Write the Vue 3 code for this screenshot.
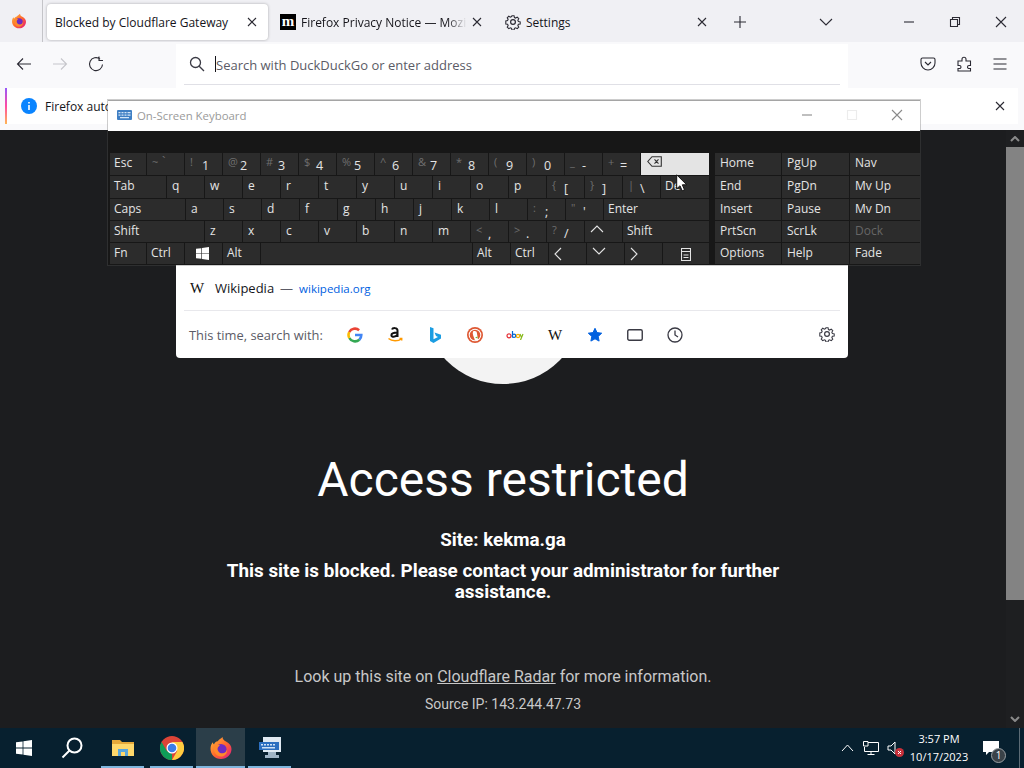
<script setup>
// keyboard rows: w = key width, s = shifted symbol shown dim at top left
const row1 = [
  { t: "Esc", w: 36 },
  { t: "`", s: "~", w: 37, dim: true },
  { t: "1", s: "!", w: 37 },
  { t: "2", s: "@", w: 37 },
  { t: "3", s: "#", w: 37 },
  { t: "4", s: "$", w: 37 },
  { t: "5", s: "%", w: 37 },
  { t: "6", s: "^", w: 37 },
  { t: "7", s: "&", w: 37 },
  { t: "8", s: "*", w: 37 },
  { t: "9", s: "(", w: 37 },
  { t: "0", s: ")", w: 37 },
  { t: "-", s: "_", w: 37 },
  { t: "=", s: "+", w: 37 },
  { icon: "back", w: 68, hot: true },
];
const letters = (str) => str.split("").map((c) => ({ t: c, w: 37, letter: true }));
const row2 = [
  { t: "Tab", w: 56 },
  ...letters("qwertyuiop"),
  { t: "[", s: "{", w: 37 },
  { t: "]", s: "}", w: 37 },
  { t: "\\", s: "|", w: 37 },
  { t: "Del", w: 48 },
];
const row3 = [
  { t: "Caps", w: 75 },
  ...letters("asdfghjkl"),
  { t: ";", s: ":", w: 37 },
  { t: "'", s: '"', w: 37 },
  { t: "Enter", w: 105 },
];
const row4 = [
  { t: "Shift", w: 94 },
  ...letters("zxcvbnm"),
  { t: ",", s: "<", w: 37 },
  { t: ".", s: ">", w: 37 },
  { t: "/", s: "?", w: 37 },
  { icon: "up", w: 37 },
  { t: "Shift", w: 86 },
];
const row5 = [
  { t: "Fn", w: 36 },
  { t: "Ctrl", w: 37 },
  { icon: "win", w: 37 },
  { t: "Alt", w: 37 },
  { w: 211 },
  { t: "Alt", w: 37 },
  { t: "Ctrl", w: 37 },
  { icon: "left", w: 37 },
  { icon: "down", w: 37 },
  { icon: "right", w: 37 },
  { icon: "menu", w: 46 },
];
const keyRows = [row1, row2, row3, row4, row5];

const navKeys = [
  ["Home", "PgUp", "Nav"],
  ["End", "PgDn", "Mv Up"],
  ["Insert", "Pause", "Mv Dn"],
  ["PrtScn", "ScrLk", "Dock"],
  ["Options", "Help", "Fade"],
];
</script>

<template>
  <div class="screen">
    <!-- shared firefox logo -->
    <svg class="defs" width="0" height="0">
      <defs>
        <linearGradient id="foxG" x1="0" y1="0" x2="1" y2="1">
          <stop offset="0" stop-color="#ffbd3f" />
          <stop offset="0.5" stop-color="#ff6a2b" />
          <stop offset="1" stop-color="#e31587" />
        </linearGradient>
        <symbol id="fox" viewBox="0 0 24 24">
          <path fill="url(#foxG)" d="M12 23C5.8 23 1.5 18.300 1.500 12.800 1.500 10 2.500 7.600 3.800 6.200 4 7.500 4.500 8 5 8.400 5.500 6.600 7 5.400 8.800 5.200 10 3.500 11.800 2.700 13.500 1 13.800 3.600 15 4.500 17 5.500 20.500 7 22.500 10 22.500 13 22.500 18.500 18 23 12 23Z" />
          <circle cx="12" cy="13.500" r="5.600" fill="#6e2bc2" />
          <path fill="#ff8a2b" d="M4.500 10C7 8.500 9.500 8.200 11 9.500 9.800 10 8.800 11 8.600 12.500 8.400 15 10.500 17.500 13.500 17.300 16 17.100 17.600 15.500 18 13.200 18.800 17 16 20.500 12 20.500 7.500 20.500 4 16 4.500 10Z" />
        </symbol>
      </defs>
    </svg>

    <!-- tab strip -->
    <header class="tabbar">
      <div class="ff-button">
        <svg width="16" height="16"><use href="#fox" /></svg>
      </div>
      <div class="tab active">
        <span class="tab-title">Blocked by Cloudflare Gateway</span>
        <svg class="x" width="10" height="10" viewBox="0 0 10 10"><path d="M1 1l8 8M9 1l-8 8" /></svg>
      </div>
      <div class="tab">
        <span class="moz">m</span>
        <span class="tab-title fade">Firefox Privacy Notice — Mozilla</span>
        <svg class="x" width="10" height="10" viewBox="0 0 10 10"><path d="M1 1l8 8M9 1l-8 8" /></svg>
      </div>
      <div class="tab">
        <svg class="gear" width="16" height="16" viewBox="0 0 16 16">
          <circle cx="8" cy="8" r="2.400" />
          <path d="M6.800 1h2.400l.4 2 1.300.6 1.800-1 1.700 1.700-1 1.800.6 1.300 2 .4v2.400l-2 .4-.6 1.300 1 1.800-1.700 1.700-1.800-1-1.300.6-.4 2H6.800l-.4-2-1.300-.6-1.800 1-1.700-1.700 1-1.800-.6-1.300-2-.4V6.800l2-.4.600-1.300-1-1.800 1.700-1.700 1.800 1 1.300-.6z" transform="translate(.8 .8) scale(.9)" />
        </svg>
        <span class="tab-title">Settings</span>
        <svg class="x" width="10" height="10" viewBox="0 0 10 10"><path d="M1 1l8 8M9 1l-8 8" /></svg>
      </div>
      <svg class="plus" width="14" height="14" viewBox="0 0 14 14"><path d="M7 1v12M1 7h12" /></svg>
      <svg class="list-all" width="14" height="8" viewBox="0 0 14 8"><path d="M1 1l6 6 6-6" /></svg>
      <div class="win-ctrls">
        <svg width="12" height="12" viewBox="0 0 12 12"><path d="M1 6h10" /></svg>
        <svg width="12" height="12" viewBox="0 0 12 12"><path d="M1.500 3.500h7v7h-7zM3.500 3.500v-2h7v7h-2" /></svg>
        <svg width="12" height="12" viewBox="0 0 12 12"><path d="M1 1l10 10M11 1L1 11" /></svg>
      </div>
    </header>

    <!-- nav toolbar -->
    <div class="toolbar">
      <div class="nav-btns">
        <svg width="16" height="16" viewBox="0 0 16 16"><path d="M15 8H1.500M7 2.500L1.500 8 7 13.500" /></svg>
        <svg class="off" width="16" height="16" viewBox="0 0 16 16"><path d="M1 8h13.500M9 2.500L14.500 8 9 13.500" /></svg>
        <svg width="16" height="16" viewBox="0 0 16 16"><path d="M14.500 8.500A6.500 6.500 0 1 1 12 3M11 .500V4.500h4" /></svg>
      </div>
      <div class="tb-right">
        <svg width="16" height="16" viewBox="0 0 16 16"><path d="M2.500 2h11A1.500 1.500 0 0 1 15 3.500V7A7 7 0 0 1 1 7V3.500A1.500 1.500 0 0 1 2.500 2ZM5 6l3 3 3-3" /></svg>
        <svg width="16" height="16" viewBox="0 0 16 16"><path d="M1.500 5H6V3.200a2 2 0 0 1 4 0V5h4v4.500h-1.500a1.500 1.500 0 0 0 0 3H14V15H1.500v-2.500H3a1.500 1.500 0 0 0 0-3H1.500Z" transform="translate(16 0) scale(-1 1)" /></svg>
        <svg width="16" height="16" viewBox="0 0 16 16"><path d="M1.500 3h13M1.500 8h13M1.500 13h13" /></svg>
      </div>
    </div>

    <!-- notification bar, most of it ends up under the popups -->
    <div class="notice-wrap">
      <div class="notice">
        <svg width="16" height="16" viewBox="0 0 16 16">
          <circle cx="8" cy="8" r="8" fill="#0a84ff" />
          <path d="M8 7v5M8 4v1.400" stroke="#fff" stroke-width="1.600" fill="none" />
        </svg>
        <span>Firefox automatically sends some data to Mozilla so that we can improve your experience.</span>
        <svg class="notice-x" width="10" height="10" viewBox="0 0 10 10"><path d="M1 1l8 8M9 1l-8 8" /></svg>
      </div>
    </div>

    <!-- page -->
    <div class="viewport">
      <main class="page">
        <div class="logo-circle"></div>
        <h1>Access restricted</h1>
        <h2 class="site">Site: kekma.ga</h2>
        <h2 class="blocked">This site is blocked. Please contact your administrator for further assistance.</h2>
        <p class="lookup">Look up this site on <a href="#">Cloudflare Radar</a> for more information.</p>
        <p class="source">Source IP: 143.244.47.73</p>
      </main>
      <div class="scrollbar">
        <svg width="10" height="6" viewBox="0 0 10 6"><path d="M1 5l4-4 4 4" /></svg>
        <div class="thumb"></div>
        <svg width="10" height="6" viewBox="0 0 10 6"><path d="M1 1l4 4 4-4" /></svg>
      </div>
    </div>

    <!-- taskbar -->
    <footer class="taskbar">
      <div class="task-start">
        <svg width="16" height="16" viewBox="0 0 16 16"><path fill="#fff" d="M0 2.300l6.600-.9v6.200H0zM7.400 1.300L16 0v7.600H7.400zM0 8.400h6.600v6.200L0 13.700zM7.400 8.400H16V16l-8.600-1.300z" /></svg>
      </div>
      <div class="task-search">
        <svg width="22" height="22" viewBox="0 0 22 22"><circle cx="13.500" cy="8.500" r="7" /><path d="M8.500 13.500L1.500 20.500" /></svg>
      </div>
      <div class="task-app first">
        <svg width="22" height="18" viewBox="0 0 22 18">
          <path fill="#e6a93a" d="M0 1h8l2 2h12v14H0z" />
          <path fill="#ffd86b" d="M0 5h22v12H0z" />
          <path fill="#5aa6dc" d="M6 10h10v7H6z" />
          <path fill="#ffd86b" d="M9 13h4v4H9z" />
        </svg>
        <i class="under"></i>
      </div>
      <div class="task-app">
        <svg width="24" height="24" viewBox="0 0 24 24">
          <circle cx="12" cy="12" r="12" fill="#db4437" />
          <path fill="#0f9d58" d="M12 24A12 12 0 0 1 1.600 6l5.200 9 5.200 3z" />
          <path fill="#ffcd40" d="M12 6h10.400A12 12 0 0 1 12 24l5.200-9z" />
          <circle cx="12" cy="12" r="5.500" fill="#fff" />
          <circle cx="12" cy="12" r="4.300" fill="#3b7de8" />
        </svg>
        <i class="under"></i>
      </div>
      <div class="task-app current">
        <svg width="24" height="24"><use href="#fox" /></svg>
        <i class="under"></i>
      </div>
      <div class="task-app">
        <svg width="26" height="24" viewBox="0 0 26 24">
          <path fill="#dfe9f2" d="M6 1h18v15H6z" />
          <path fill="#2b6fc0" d="M2 6h20v8H2z" />
          <path fill="#cfe2f5" d="M4 8h2v1.500H4zM7 8h2v1.500H7zM10 8h2v1.500h-2zM13 8h2v1.500h-2zM16 8h2v1.500h-2zM5 11h13v1.500H5z" />
          <path fill="#9fb4c6" d="M11 16h8v3h3v3H8v-3h3z" />
        </svg>
        <i class="under"></i>
      </div>
      <div class="tray">
        <svg class="t-up" width="13" height="8" viewBox="0 0 13 8"><path d="M1 7l5.500-6L12 7" /></svg>
        <svg class="t-net" width="16" height="14" viewBox="0 0 16 14"><path d="M5 1.500h10.500v9H1.500V6M8 10.500v3M4.500 13.500h7" /><path d="M.5.500h4.500v4.500H.5z" /></svg>
        <div class="t-vol">
          <svg width="12" height="14" viewBox="0 0 12 14"><path d="M1 5h3l4-4v12L4 9H1z" /></svg>
          <svg class="mute" width="9" height="9" viewBox="0 0 9 9"><circle cx="4.500" cy="4.500" r="4.500" fill="#c8303a" /><path d="M3 3l3 3M6 3L3 6" /></svg>
        </div>
        <div class="clock">
          <span>3:57 PM</span>
          <span>10/17/2023</span>
        </div>
        <div class="t-notif">
          <svg width="16" height="15" viewBox="0 0 16 15"><path d="M0 0h16v11H6l-3 3v-3H0z" /></svg>
          <b>1</b>
        </div>
        <i class="show-desk"></i>
      </div>
    </footer>

    <!-- address bar dropdown -->
    <section class="urlbar">
      <div class="url-input">
        <svg width="16" height="16" viewBox="0 0 16 16"><circle cx="6.500" cy="6.500" r="5" /><path d="M10.200 10.200L15 15" /></svg>
        <i class="caret"></i>
        <span>Search with DuckDuckGo or enter address</span>
      </div>
      <div class="url-spacer"></div>
      <div class="result">
        <span class="wiki">W</span>
        <span class="r-title">Wikipedia</span>
        <span class="r-dash">—</span>
        <span class="r-url">wikipedia.org</span>
      </div>
      <div class="oneoff">
        <span class="oneoff-label">This time, search with:</span>
        <div class="engines">
          <svg width="16" height="16" viewBox="0 0 16 16" fill="none" stroke-width="2.600">
            <path stroke="#4285f4" d="M8 8h6.300a6.400 6.400 0 0 1-2 4.700" />
            <path stroke="#34a853" d="M12.300 12.700A6.400 6.400 0 0 1 2.300 11" />
            <path stroke="#fbbc05" d="M2.300 11a6.400 6.400 0 0 1 0-6" />
            <path stroke="#ea4335" d="M2.300 5a6.400 6.400 0 0 1 9.800-1.800" />
          </svg>
          <svg width="16" height="17" viewBox="0 0 16 17">
            <path fill="none" stroke="#111" stroke-width="2" d="M5 3.500C5.500 1.800 10.500 1.200 10.500 4.500V11M10.500 6.500C6 6.500 4.400 7.500 4.400 9.200 4.400 11.200 8.500 11.500 10.500 8.500" />
            <path fill="none" stroke="#f90" stroke-width="1.500" d="M1.500 12.500C5 15.500 11 15.500 14.500 12.800M12.500 12.500h2.200v2" />
          </svg>
          <svg width="16" height="18" viewBox="0 0 16 18">
            <path fill="#1b9de2" d="M3 1l3.500 1.300v11l4.500-2.300-2-1L7.500 6.500l6.500 2.300v3.800L6.500 17 3 15z" />
          </svg>
          <svg width="16" height="16" viewBox="0 0 16 16">
            <circle cx="8" cy="8" r="8" fill="#de5833" />
            <circle cx="8" cy="8" r="6.300" fill="#fff" />
            <circle cx="8" cy="8" r="5.300" fill="#de5833" />
            <path fill="#fff" d="M6 4.500c2-1 4-.3 4 2 0 1.500 1 4.500 1 6.500l-3 .5C7 10 5 7 6 4.500z" />
            <path fill="#6bb536" d="M8 10.500l2.500-1v2z" />
          </svg>
          <svg class="ebay" width="18" height="10" viewBox="0 0 18 10" fill="none" stroke-width="1.200">
            <circle cx="3" cy="5.800" r="2" stroke="#e53238" />
            <path stroke="#0064d2" d="M6.500 1v6.500" /><circle cx="8" cy="5.800" r="1.700" stroke="#0064d2" />
            <circle cx="12" cy="6" r="1.600" stroke="#f5af02" />
            <path stroke="#86b817" d="M14 4l1.500 3.500M17 4l-2.500 6" />
          </svg>
          <span class="wiki">W</span>
          <svg width="16" height="16" viewBox="0 0 16 16"><path fill="#0060df" stroke="#0060df" stroke-linejoin="round" d="M8 1.300l2 4.300 4.700.6-3.500 3.200.9 4.700L8 11.800l-4.100 2.300.9-4.700L1.300 6.200 6 5.600z" /></svg>
          <svg width="16" height="12" viewBox="0 0 16 12"><rect x=".750" y=".750" width="14.500" height="10.500" rx="1.500" fill="none" stroke="#3a3a44" stroke-width="1.400" /></svg>
          <svg width="16" height="16" viewBox="0 0 16 16" fill="none" stroke="#3a3a44" stroke-width="1.300"><circle cx="8" cy="8" r="7" /><path d="M8 3.500V8l3 2" /></svg>
        </div>
        <svg class="cog" width="16" height="16" viewBox="0 0 16 16" fill="none" stroke="#3a3a44" stroke-width="1.200">
          <circle cx="8" cy="8" r="2.400" />
          <path d="M6.800 1h2.400l.4 2 1.300.6 1.800-1 1.700 1.700-1 1.800.6 1.300 2 .4v2.400l-2 .4-.6 1.300 1 1.800-1.700 1.700-1.800-1-1.300.6-.4 2H6.800l-.4-2-1.300-.6-1.800 1-1.700-1.700 1-1.800-.6-1.300-2-.4V6.800l2-.4.600-1.300-1-1.800 1.700-1.700 1.800 1 1.300-.6z" transform="translate(.8 .8) scale(.9)" />
        </svg>
      </div>
    </section>

    <!-- on-screen keyboard window -->
    <section class="osk">
      <div class="osk-title">
        <svg width="15" height="10" viewBox="0 0 15 10">
          <rect width="15" height="10" rx="1" fill="#3f7fc4" />
          <path fill="#d4e6f7" d="M1.500 2h2v1.300h-2zM4.500 2h2v1.300h-2zM7.500 2h2v1.300h-2zM10.500 2h3v1.300h-3zM1.500 4.500h2v1.300h-2zM4.500 4.500h2v1.300h-2zM7.500 4.500h2v1.300h-2zM10.500 4.500h3v1.300h-3zM3 7h9v1.300H3z" />
        </svg>
        <span>On-Screen Keyboard</span>
        <div class="osk-ctrls">
          <svg width="12" height="12" viewBox="0 0 12 12"><path d="M1 6h10" /></svg>
          <svg class="faint" width="12" height="12" viewBox="0 0 12 12"><path d="M1.500 1.500h9v9h-9z" /></svg>
          <svg width="12" height="12" viewBox="0 0 12 12"><path d="M1 1l10 10M11 1L1 11" /></svg>
        </div>
      </div>
      <div class="osk-body">
        <div class="keys">
          <div class="key-row" v-for="(row, i) in keyRows" :key="i">
            <div
              v-for="(k, j) in row"
              :key="j"
              class="key"
              :class="{ hot: k.hot, letter: k.letter, shifted: k.s, 'dim-main': k.dim }"
              :style="{ width: k.w + 'px' }"
            >
              <span v-if="k.s" class="shift-sym">{{ k.s }}</span>
              <span v-if="k.t" class="main-sym">{{ k.t }}</span>
              <svg v-if="k.icon === 'back'" class="ki back" width="15" height="11" viewBox="0 0 15 11"><path d="M5 .700h9.300v9.600H5L.800 5.500zM7.500 3.300l4 4.400M11.500 3.300l-4 4.400" /></svg>
              <svg v-if="k.icon === 'win'" class="ki win" width="13" height="13" viewBox="0 0 16 16"><path d="M0 2.300l6.600-.9v6.200H0zM7.400 1.300L16 0v7.600H7.400zM0 8.400h6.600v6.200L0 13.700zM7.400 8.400H16V16l-8.600-1.300z" /></svg>
              <svg v-if="k.icon === 'up'" class="ki mid" width="14" height="8" viewBox="0 0 14 8"><path d="M1 7l6-6 6 6" /></svg>
              <svg v-if="k.icon === 'down'" class="ki mid" width="14" height="8" viewBox="0 0 14 8"><path d="M1 1l6 6 6-6" /></svg>
              <svg v-if="k.icon === 'left'" class="ki mid" width="8" height="14" viewBox="0 0 8 14"><path d="M7 1L1 7l6 6" /></svg>
              <svg v-if="k.icon === 'right'" class="ki mid" width="8" height="14" viewBox="0 0 8 14"><path d="M1 1l6 6-6 6" /></svg>
              <svg v-if="k.icon === 'menu'" class="ki mid-c" width="10" height="13" viewBox="0 0 10 13"><path d="M.500.500h9v12h-9zM.500 3.500h9M2.500 7h5M2.500 9.500h5" /></svg>
            </div>
          </div>
        </div>
        <div class="nav-keys">
          <template v-for="(row, i) in navKeys" :key="i">
            <div v-for="n in row" :key="n" class="key nav-key" :class="{ dock: n === 'Dock' }">{{ n }}</div>
          </template>
        </div>
      </div>
    </section>

    <!-- mouse pointer -->
    <svg class="pointer" width="12" height="18" viewBox="0 0 12 18">
      <path fill="#fff" stroke="#111" d="M.700.800v14l3.300-3 2.200 5 2.300-1-2.200-5h4.400z" />
    </svg>
  </div>
</template>

<style>
html,
body {
  margin: 0;
  background: #1c1d1f;
}
</style>

<style scoped>
.screen {
  position: relative;
  width: 1024px;
  height: 768px;
  overflow: hidden;
  display: flex;
  flex-direction: column;
  font-family: "Open Sans", "Noto Sans", sans-serif;
  background: #1c1d1f;
}
.defs {
  position: absolute;
}

/* tabs */
.tabbar {
  height: 42px;
  background: #f0f0f4;
  display: flex;
  align-items: flex-start;
  flex: none;
}
.ff-button {
  width: 42px;
  height: 42px;
  border-right: 1px solid #c4c4c8;
  box-sizing: content-box;
  display: flex;
  align-items: center;
  justify-content: center;
  margin-right: 4px;
}
.ff-button svg {
  margin-left: -4px;
}
.tab {
  width: 221px;
  height: 36px;
  margin: 4px 4px 0 0;
  padding: 0 11px 0 8px;
  box-sizing: border-box;
  display: flex;
  align-items: center;
  gap: 5px;
  border-radius: 4px;
  font-size: 12px;
  color: #15141a;
}
.tab.active {
  background: #fff;
  box-shadow: 0 0 3px rgba(0, 0, 0, 0.3);
}
.tab-title {
  flex: 1;
  white-space: nowrap;
  overflow: hidden;
}
.tab-title.fade {
  -webkit-mask-image: linear-gradient(to right, #000 88%, transparent 100%);
  mask-image: linear-gradient(to right, #000 88%, transparent 100%);
}
.moz {
  width: 16px;
  height: 16px;
  background: #000;
  color: #fff;
  font: bold 15px/14px "Liberation Serif", serif;
  text-align: center;
  flex: none;
}
.x path,
.plus path,
.list-all path,
.win-ctrls path,
.notice-x path,
.nav-btns path,
.tb-right path,
.osk-ctrls path {
  fill: none;
  stroke: #2b2a33;
  stroke-width: 1.1;
}
.gear {
  flex: none;
}
.gear circle,
.gear path {
  fill: none;
  stroke: #2b2a33;
  stroke-width: 1.2;
}
.plus {
  margin: 15px 0 0 11px;
}
.list-all {
  margin: 18px 0 0 72px;
}
.win-ctrls {
  margin-left: auto;
  display: flex;
  gap: 34px;
  padding: 16px 17px 0 0;
}

/* toolbar */
.toolbar {
  height: 44px;
  flex: none;
  background: #f9f9fb;
  display: flex;
  align-items: center;
  justify-content: space-between;
}
.nav-btns {
  display: flex;
  gap: 20px;
  padding-left: 16px;
}
.nav-btns .off path {
  stroke: #c6c6cb;
}
.tb-right {
  display: flex;
  gap: 20px;
  padding-right: 16px;
}

/* notice */
.notice-wrap {
  height: 44px;
  flex: none;
  background: #f9f9fb;
  padding: 2px 6px 6px 5px;
  box-sizing: border-box;
}
.notice {
  height: 36px;
  background: #fff;
  border-left: 2px solid;
  border-image: linear-gradient(#9059ff, #ff4aa2, #ffbd4f) 1;
  padding: 0 13px 0 14px;
  display: flex;
  align-items: center;
  gap: 8px;
  font-size: 12px;
  color: #15141a;
}
.notice span {
  flex: 1;
  white-space: nowrap;
}

/* page */
.viewport {
  flex: 1;
  display: flex;
  min-height: 0;
}
.page {
  flex: 1;
  color: #fff;
  text-align: center;
  font-family: Roboto, sans-serif;
  padding-top: 94px;
}
.logo-circle {
  width: 160px;
  height: 160px;
  border-radius: 50%;
  background: #f3f3f3;
  margin: 0 auto;
}
h1 {
  margin: 68px 0 0;
  font-size: 48px;
  line-height: 56px;
  font-weight: 400;
}
.site {
  margin: 22px 0 0;
  font-size: 18.8px;
  line-height: 21px;
  font-weight: 700;
}
.blocked {
  margin: 10px auto 0;
  width: 570px;
  font-size: 18.85px;
  line-height: 21px;
  font-weight: 700;
}
.lookup {
  margin: 64px 0 0;
  font-size: 16px;
  line-height: 19px;
  color: #c8c8c8;
}
.lookup a {
  color: #c8c8c8;
}
.source {
  margin: 10px 0 0;
  font-size: 14px;
  line-height: 17px;
  color: #c8c8c8;
}
.scrollbar {
  width: 18px;
  flex: none;
  display: flex;
  flex-direction: column;
  align-items: center;
  background: #1e1f21;
}
.scrollbar svg {
  flex: none;
  margin: 6px 0;
}
.scrollbar path {
  fill: none;
  stroke: #8a8a8a;
  stroke-width: 2;
}
.thumb {
  width: 100%;
  height: 453px;
  background: #838383;
  margin: -1px 0 auto;
}

/* taskbar */
.taskbar {
  height: 40px;
  flex: none;
  background: #07202f;
  display: flex;
  align-items: stretch;
}
.task-start {
  width: 48px;
  display: flex;
  align-items: center;
  justify-content: center;
}
.task-search {
  width: 48px;
  display: flex;
  align-items: center;
  justify-content: center;
}
.task-search circle,
.task-search path {
  fill: none;
  stroke: #fff;
  stroke-width: 2;
}
.task-app {
  position: relative;
  width: 49px;
  display: flex;
  align-items: center;
  justify-content: center;
}
.task-app.first {
  margin-left: 2px;
}
.task-app.current {
  background: #2b3e49;
}
.under {
  position: absolute;
  left: 3px;
  right: 3px;
  bottom: 0;
  height: 2px;
  background: #7fb6de;
}
.task-app.current .under {
  left: 0;
  right: 0;
}
.tray {
  margin-left: auto;
  display: flex;
  align-items: center;
  color: #fff;
}
.tray path {
  fill: none;
  stroke: #fff;
}
.t-up {
  margin-right: 9px;
}
.t-vol {
  position: relative;
  margin-left: 8px;
  display: flex;
}
.mute {
  position: absolute;
  left: 8px;
  top: 7px;
}
.clock {
  width: 74px;
  margin-left: 3px;
  display: flex;
  flex-direction: column;
  align-items: center;
  font-size: 11px;
  line-height: 18px;
}
.t-notif {
  position: relative;
  width: 16px;
  margin-left: 7px;
  display: flex;
}
.t-notif path {
  fill: #fff;
  stroke: none;
}
.t-notif b {
  position: absolute;
  left: 8px;
  top: 7px;
  width: 15px;
  height: 15px;
  border-radius: 50%;
  background: #3a4248;
  border: 1px solid #9aa0a4;
  box-sizing: border-box;
  font-size: 10px;
  line-height: 13px;
  font-weight: 400;
  text-align: center;
}
.show-desk {
  width: 1px;
  height: 100%;
  background: #5c6b75;
  margin-left: 20px;
  margin-right: 4px;
}

/* url dropdown */
.urlbar {
  position: absolute;
  left: 176px;
  top: 44px;
  width: 672px;
  height: 314px;
  background: #fff;
  border-radius: 0 0 4px 4px;
  display: flex;
  flex-direction: column;
}
.url-input {
  height: 40px;
  margin: 0 8px;
  flex: none;
  border-bottom: 1px solid #e0e0e6;
  display: flex;
  align-items: center;
  font-size: 13px;
  color: #5b5b66;
}
.url-input span {
  padding-top: 2px;
}
.url-input svg {
  margin: 0 10px 0 5px;
}
.url-input circle,
.url-input path {
  fill: none;
  stroke: #3a3a44;
  stroke-width: 1.300;
}
.caret {
  width: 1px;
  height: 16px;
  background: #15141a;
}
.url-spacer {
  flex: 1;
}
.result {
  height: 22px;
  padding-left: 13px;
  margin-bottom: 11px;
  display: flex;
  align-items: center;
  font-size: 13px;
  color: #15141a;
}
.wiki {
  width: 16px;
  font: 15px/16px "Liberation Serif", serif;
  color: #111;
  text-align: center;
}
.r-title {
  margin-left: 10px;
}
.r-dash {
  margin-left: 6px;
  color: #5b5b66;
}
.r-url {
  margin-left: 6px;
  font-size: 11.5px;
  color: #0060df;
}
.oneoff {
  height: 47px;
  margin: 0 8px;
  padding-left: 5px;
  flex: none;
  border-top: 1px solid #e8e8ec;
  display: flex;
  align-items: center;
  font-size: 12.9px;
  color: #5b5b66;
}
.oneoff-label {
  width: 158px;
  flex: none;
  white-space: nowrap;
}
.engines {
  display: flex;
  align-items: center;
  gap: 24px;
}
.engines .ebay {
  margin: 0 -1px;
}
.cog {
  margin-left: auto;
  margin-right: 5px;
  margin-bottom: 2px;
}

/* on-screen keyboard */
.osk {
  position: absolute;
  left: 108px;
  top: 100px;
  width: 812px;
  height: 165px;
  background: #171717;
  box-shadow: 0 0 0 1px rgba(90, 90, 90, 0.3);
  font-family: "Open Sans", "Noto Sans", sans-serif;
}
.osk-title {
  height: 31px;
  box-sizing: border-box;
  background: #fff;
  border-top: 1px solid #a5a5a5;
  padding: 0 0 2px 9px;
  display: flex;
  align-items: center;
  font-size: 11.4px;
  color: #9a9a9a;
  gap: 5px;
}
.osk-ctrls {
  margin-left: auto;
  display: flex;
  gap: 33px;
  padding-right: 17px;
}
.osk-ctrls path {
  stroke: #8a8a8a;
}
.osk-ctrls .faint path {
  stroke: #ececec;
}
.osk-body {
  display: flex;
  padding: 22px 0 0 2px;
  gap: 6px;
}
.keys {
  width: 599px;
  display: grid;
  grid-template-rows: 22px 22px 21px 21px 21px;
  gap: 1px;
}
.key-row {
  display: flex;
  gap: 1px;
}
.key {
  position: relative;
  height: 100%;
  background: #2c2c2c;
  color: #e4e4e4;
  font-size: 12px;
  line-height: 19px;
  padding-left: 4px;
  box-sizing: border-box;
  flex: none;
  white-space: nowrap;
}
.key.letter {
  padding-left: 5px;
}
.key.hot {
  background: #e4e4e4;
}
.shift-sym {
  position: absolute;
  left: 5px;
  top: -1px;
  font-size: 11px;
  color: #6f6f6f;
}
.shifted .main-sym {
  position: absolute;
  left: 17px;
  top: 3px;
  font-size: 12.5px;
}
.dim-main .main-sym {
  left: 15px;
  top: -1px;
  color: #6f6f6f;
}
.ki {
  position: absolute;
  left: 8px;
  top: 4px;
}
.ki path {
  fill: none;
  stroke: #e4e4e4;
  stroke-width: 1.1;
}
.ki.back {
  left: 6px;
  top: 3px;
}
.ki.back path {
  stroke: #333;
}
.ki.win {
  left: 11px;
  top: 4px;
}
.ki.win path {
  fill: #fff;
  stroke: none;
}
.ki.mid {
  left: 5px;
  top: 4px;
}
.ki.mid-c {
  left: 18px;
  top: 5px;
}
.nav-keys {
  width: 205px;
  display: grid;
  grid-template-columns: 66px 67px 70px;
  grid-template-rows: 22px 22px 21px 21px 21px;
  gap: 1px;
}
.nav-key {
  padding-left: 5px;
  font-size: 12px;
  line-height: 19px;
}
.nav-key.dock {
  color: #666;
}
.pointer {
  position: absolute;
  left: 676px;
  top: 174px;
}
</style>
